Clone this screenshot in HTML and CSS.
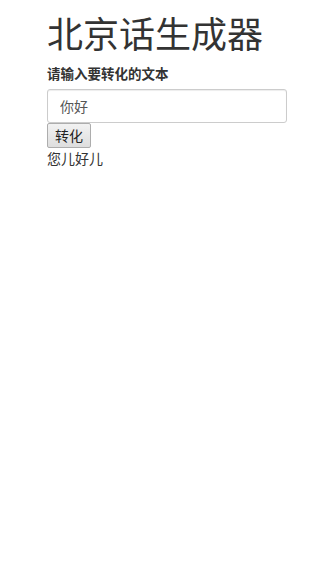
FILE: index.html
```html
<!DOCTYPE html>
<html lang="zh-CN">
<head>
<meta charset="utf-8">
<title>北京话生成器</title>
<link rel="stylesheet" href="styles.css">
</head>
<body>
<div class="page">
  <h1 class="title">北京话生成器</h1>
  <label class="label" for="src">请输入要转化的文本</label>
  <input id="src" class="field" type="text" value="你好">
  <button class="btn" type="button">转化</button>
  <div class="result">您儿好儿</div>
</div>
</body>
</html>
```

FILE: styles.css
```css
html, body {
  margin: 0;
  padding: 0;
  background: #fff;
}
body {
  font-family: "Noto Sans CJK SC", "Liberation Sans", sans-serif;
  color: #333;
  font-size: 14px;
  line-height: 1.2;
}
.page {
  padding: 0 36px 0 47px;
  display: flex;
  flex-direction: column;
  align-items: flex-start;
}
.title {
  margin: 13px 0 11px;
  font-size: 36px;
  font-weight: 400;
  line-height: 1.1;
  color: #333;
}
.label {
  font-size: 13.5px;
  font-weight: 700;
  line-height: 18px;
  margin-bottom: 7px;
}
.field {
  box-sizing: border-box;
  width: 240px;
  height: 34px;
  margin: 0;
  padding: 6px 12px;
  border: 1px solid #ccc;
  border-radius: 3px;
  font-family: inherit;
  font-size: 14px;
  color: #555;
  box-shadow: inset 0 1px 1px rgba(0,0,0,.075);
}
.btn {
  box-sizing: border-box;
  height: 25px;
  width: 44px;
  margin: 0;
  padding: 0 6px;
  border: 1px solid #adadad;
  border-radius: 2px;
  background: linear-gradient(#f2f2f2, #dedede);
  font-family: inherit;
  font-size: 14px;
  color: #222;
}
.result {
  font-size: 14px;
  line-height: 20px;
}
```
